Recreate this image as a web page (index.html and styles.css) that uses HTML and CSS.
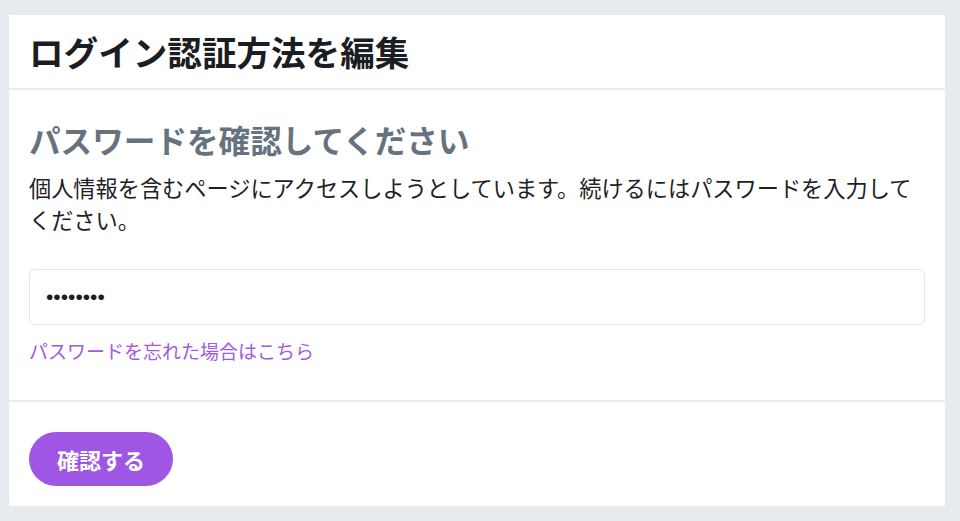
FILE: index.html
```html
<!DOCTYPE html>
<html lang="ja">
<head>
    <meta charset="UTF-8">
    <meta name="viewport" content="width=device-width, initial-scale=1.0">
    <title>ログイン認証方法を編集</title>
    <link rel="stylesheet" href="styles.css">
</head>
<body>

    <div class="card">
        <div class="card-head">
            <h1>ログイン認証方法を編集</h1>
        </div>

        <div class="card-body">
            <h2>パスワードを確認してください</h2>
            <p class="lead">個人情報を含むページにアクセスしようとしています。続けるにはパスワードを入力してください。</p>
            <input type="password" class="pw" value="password">
            <a href="#" class="forgot">パスワードを忘れた場合はこちら</a>
        </div>

        <div class="card-foot">
            <button class="btn">確認する</button>
        </div>
    </div>

</body>
</html>
```

FILE: styles.css
```css
body {
    margin: 0;
    padding: 15px 15px 15px 9px;
    background-color: #e6ebf0;
    font-family: "Noto Sans CJK JP", "Noto Sans", sans-serif;
    color: #1e2226;
}
.card {
    background: #fff;
}
.card-head {
    height: 73px;
    display: flex;
    align-items: center;
    padding: 0 20px;
    border-bottom: 2px solid #e6ebf0;
}
h1 {
    margin: 0;
    font-size: 34.6px;
    font-weight: 700;
    line-height: 1;
    color: #1a1d21;
}
.card-body {
    padding: 29px 20px 36px;
    border-bottom: 2px solid #e6ebf0;
}
h2 {
    margin: 0;
    font-size: 31.6px;
    line-height: 40px;
    font-weight: 700;
    color: #66737f;
}
.lead {
    margin: 13px 0 0;
    font-size: 22.2px;
    line-height: 31.5px;
}
.pw {
    display: block;
    box-sizing: border-box;
    width: 100%;
    height: 56px;
    margin-top: 34px;
    padding: 0 16px;
    border: 1.5px solid #e1e6ec;
    border-radius: 6px;
    font-family: "Liberation Sans", sans-serif;
    font-size: 21px;
    color: #1a1d21;
    outline: none;
}
.forgot {
    display: inline-block;
    margin-top: 13px;
    font-size: 19px;
    line-height: 26px;
    color: #a259e2;
    text-decoration: none;
}
.card-foot {
    padding: 30px 20px 20px;
}
.btn {
    height: 54px;
    padding: 0 28px;
    border: none;
    border-radius: 27px;
    background-color: #a056e4;
    color: #fff;
    font-family: "Noto Sans CJK JP", sans-serif;
    font-size: 22px;
    font-weight: 700;
    cursor: pointer;
}
```
